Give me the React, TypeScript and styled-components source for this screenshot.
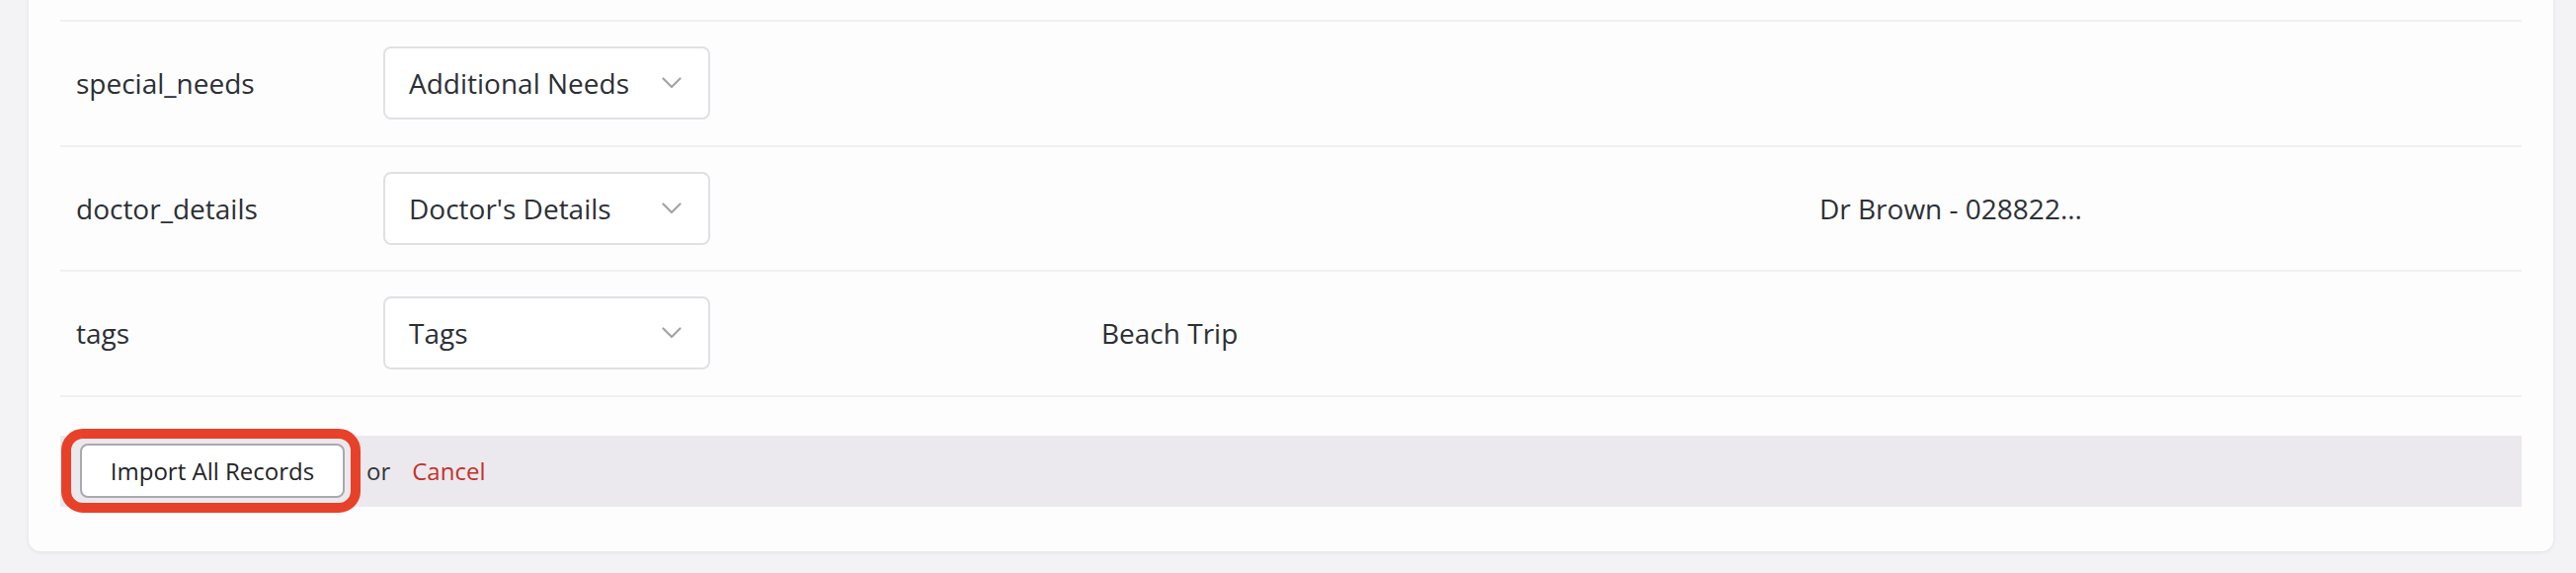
import React from "react";
import styled, { createGlobalStyle } from "styled-components";

const GlobalStyle = createGlobalStyle`
  html, body {
    margin: 0;
    padding: 0;
    background: #f3f2f4;
    font-family: "Open Sans", "Noto Sans", sans-serif;
    color: #2c3035;
  }
`;

type Mapping = {
  field: string;
  column: string;
  sample?: string;
  sampleColumn?: 1 | 2;
};

const mappings: Mapping[] = [
  { field: "special_needs", column: "Additional Needs" },
  {
    field: "doctor_details",
    column: "Doctor's Details",
    sample: "Dr Brown - 028822...",
    sampleColumn: 2,
  },
  { field: "tags", column: "Tags", sample: "Beach Trip", sampleColumn: 1 },
];

function Chevron() {
  return (
    <svg width="20" height="12" viewBox="0 0 20 12" fill="none">
      <path
        d="M1.5 1.5 L10 10 L18.5 1.5"
        stroke="#a3a3a8"
        strokeWidth="2.2"
        strokeLinecap="round"
        strokeLinejoin="round"
      />
    </svg>
  );
}

export default function App() {
  return (
    <>
      <GlobalStyle />
      <Page>
        <Card>
          <Table>
            {mappings.map((m) => (
              <Row key={m.field}>
                <Cell>{m.field}</Cell>
                <Cell>
                  <Select>
                    <span>{m.column}</span>
                    <Chevron />
                  </Select>
                </Cell>
                <Cell>{m.sampleColumn === 1 ? m.sample : null}</Cell>
                <Cell>{m.sampleColumn === 2 ? m.sample : null}</Cell>
              </Row>
            ))}
          </Table>
          <ActionBar>
            <Highlight>
              <ImportButton>Import All Records</ImportButton>
            </Highlight>
            <Or>or</Or>
            <CancelLink href="#">Cancel</CancelLink>
          </ActionBar>
        </Card>
      </Page>
    </>
  );
}

const Page = styled.div`
  padding: 0 23px 23px 29px;
`;

const Card = styled.div`
  margin-top: -20px;
  padding: 40px 32px 45px 32px;
  background: #fdfdfe;
  border-radius: 12px;
  box-shadow: 0 1px 4px rgba(0, 0, 0, 0.08);
`;

const Table = styled.div`
  border-top: 2px solid #f0eff2;
`;

const Row = styled.div`
  display: grid;
  grid-template-columns: 311px 1fr 1fr 1fr;
  align-items: center;
  height: 124.5px;
  border-bottom: 2px solid #f0eff2;
`;

const Cell = styled.div`
  padding: 0 16px;
  font-size: 28px;
  line-height: 38px;
  color: #2c3035;
  white-space: nowrap;
`;

const Select = styled.div`
  box-sizing: border-box;
  width: 331px;
  height: 74px;
  display: flex;
  align-items: center;
  justify-content: space-between;
  padding: 0 27px 0 24px;
  background: #ffffff;
  border: 2px solid #e1e0e5;
  border-radius: 8px;
  font-size: 28px;
  color: #2c3035;
`;

const ActionBar = styled.div`
  margin-top: 39px;
  height: 72px;
  display: flex;
  align-items: center;
  gap: 22px;
  padding-left: 20px;
  background: #ebe9ed;
`;

const Highlight = styled.div`
  position: relative;
  display: flex;

  &::after {
    content: "";
    position: absolute;
    left: -19px;
    right: -16px;
    top: -15px;
    bottom: -15px;
    border: 10px solid #e8412a;
    border-radius: 22px;
    pointer-events: none;
  }
`;

const ImportButton = styled.button`
  box-sizing: border-box;
  width: 268px;
  height: 55px;
  background: #ffffff;
  border: 2px solid #a9a9ae;
  border-radius: 8px;
  font-family: "Open Sans", "Noto Sans", sans-serif;
  font-size: 24px;
  color: #222428;
  cursor: pointer;
`;

const Or = styled.span`
  font-size: 24px;
  color: #33363a;
`;

const CancelLink = styled.a`
  font-size: 24px;
  color: #c5302c;
  text-decoration: none;
`;
